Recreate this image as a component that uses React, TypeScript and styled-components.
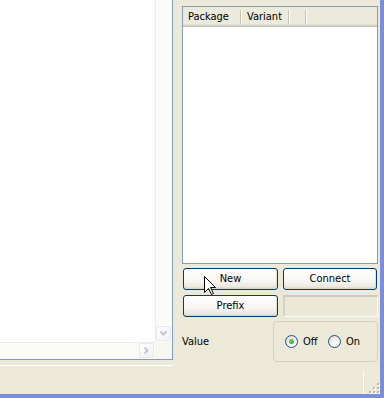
import React from "react";
import styled, { createGlobalStyle } from "styled-components";

const GlobalStyle = createGlobalStyle`
  html, body { margin: 0; padding: 0; background: #ece9d8; }
  body {
    width: 384px; height: 398px; overflow: hidden;
    font-family: "DejaVu Sans Condensed", "Liberation Sans", sans-serif;
    font-size: 11px; color: #000;
  }
  #root { width: 384px; height: 398px; }
`;

const Window = styled.div`
  position: relative;
  width: 384px;
  height: 398px;
  box-sizing: border-box;
  border-right: 4px solid #7b8ddf;
  border-bottom: 4px solid #7b8ddf;
  display: flex;
  flex-direction: column;
  background: #ece9d8;
`;

const Main = styled.div`
  display: flex;
  height: 365px;
  flex: none;
`;

const LeftPanel = styled.div`
  width: 173px;
  height: 360px;
  box-sizing: border-box;
  border-right: 1px solid #7f9db9;
  border-bottom: 1px solid #7f9db9;
  background: #fff;
  display: grid;
  grid-template-columns: 1fr 17px;
  grid-template-rows: 1fr 17px;
`;

const Content = styled.div`
  background: #fff;
`;

const VScroll = styled.div`
  background: #fbfbf8;
  box-shadow: inset 1px 0 0 #ecebe4;
  display: flex;
  flex-direction: column;
  justify-content: flex-end;
`;

const HScroll = styled.div`
  background: #fbfbf8;
  box-shadow: inset 0 1px 0 #ecebe4;
  display: flex;
  justify-content: flex-end;
`;

const Corner = styled.div`
  background: #f7f6f1;
`;

const ScrollButton = styled.div`
  width: 17px;
  height: 17px;
  box-sizing: border-box;
  padding: 1px;
  display: flex;
`;

const ScrollFace = styled.div`
  flex: 1;
  border: 1px solid #e6e9ef;
  border-radius: 2px;
  background: linear-gradient(135deg, #ffffff, #eef0f4);
  display: flex;
  align-items: center;
  justify-content: center;
`;

const RightColumn = styled.div`
  flex: 1;
  display: flex;
  flex-direction: column;
  padding: 6px 2px 0 9px;
`;

const List = styled.div`
  height: 258px;
  box-sizing: border-box;
  border: 1px solid #7f9db9;
  background: #fff;
  display: flex;
  flex-direction: column;
`;

const Header = styled.div`
  height: 20px;
  display: flex;
  background: #ebeadb;
  box-shadow: inset 0 -1px 0 #cbc7b8, inset 0 -2px 0 #d6d2c2, inset 0 -3px 0 #e2e2da;
`;

const HeaderCell = styled.div<{ $w?: number }>`
  ${(p) => (p.$w ? `width: ${p.$w}px; flex: none;` : "flex: 1;")}
  box-sizing: border-box;
  padding: 1px 0 2px 5px;
  display: flex;
  align-items: center;
  white-space: nowrap;
  background-image: ${(p) =>
    p.$w
      ? "linear-gradient(#c7c4b4, #c7c4b4), linear-gradient(#fff, #fff)"
      : "none"};
  background-repeat: no-repeat;
  background-size: 1px 14px, 1px 14px;
  background-position: right 1px top 3px, right 0 top 3px;
`;

const ButtonGrid = styled.div`
  display: grid;
  grid-template-columns: 95px 94px;
  grid-template-rows: 22px 22px;
  column-gap: 5px;
  row-gap: 5px;
  margin: 4px 1px 0;
`;

const Button = styled.div`
  box-sizing: border-box;
  border: 1px solid #003c74;
  border-radius: 3px;
  background: linear-gradient(180deg, #ffffff 0%, #f7f6f2 60%, #ebe8de 88%, #d6d0c5 100%);
  box-shadow: inset -1px 0 0 #e3dfd5;
  display: flex;
  align-items: center;
  justify-content: center;
  padding-bottom: 1px;
`;

const DisabledEdit = styled.div`
  box-sizing: border-box;
  margin-right: -1px;
  border-top: 2px solid #cfcbbb;
  border-left: 2px solid #d8d4c5;
  border-bottom: 1px solid #fdfdfb;
  border-right: 1px solid #fdfdfb;
  background: #ebe8d8;
`;

const ValueRow = styled.div`
  margin-top: 4px;
  display: flex;
  align-items: center;
  justify-content: space-between;
`;

const Label = styled.span`
  padding-left: 0;
`;

const GroupBox = styled.div`
  width: 105px;
  height: 41px;
  box-sizing: border-box;
  border: 1px solid #d5d2c2;
  border-radius: 4px;
  display: grid;
  grid-template-columns: 43px auto;
  align-items: center;
  padding-left: 11px;
`;

const RadioItem = styled.label`
  display: flex;
  align-items: center;
  gap: 5px;
`;

const RadioCircle = styled.span<{ $checked?: boolean }>`
  width: 13px;
  height: 13px;
  box-sizing: border-box;
  border-radius: 50%;
  border: 1px solid #1c5180;
  background: radial-gradient(circle at 70% 75%, #ffffff 0%, #f2f1ec 45%, #d6d4ca 100%);
  display: flex;
  align-items: center;
  justify-content: center;
  &::after {
    content: "";
    display: ${(p) => (p.$checked ? "block" : "none")};
    width: 5px;
    height: 5px;
    border-radius: 50%;
    background: radial-gradient(circle at 40% 40%, #62d862, #21a121);
  }
`;

const StatusBar = styled.div`
  flex: 1;
  display: flex;
`;

const StatusLeft = styled.div`
  width: 173px;
  border-top: 1px solid #fff;
`;

const StatusSpacer = styled.div`
  flex: 1;
`;

const PaneSeparator = styled.div`
  width: 1px;
  margin-top: 6px;
  background: #fff;
`;

const GripPane = styled.div`
  width: 16px;
  display: flex;
`;

const Cursor = styled.svg`
  position: absolute;
  left: 204px;
  top: 276px;
  pointer-events: none;
`;

const Chevron = ({ dir }: { dir: "down" | "right" }) => (
  <svg width="9" height="9" viewBox="0 0 9 9">
    <path
      d={dir === "down" ? "M1.5 2.5 L4.5 5.5 L7.5 2.5" : "M2.5 1.5 L5.5 4.5 L2.5 7.5"}
      fill="none"
      stroke="#c3c7d1"
      strokeWidth="2"
    />
  </svg>
);

const Grip = () => {
  const dots: [number, number][] = [
    [13, 18],
    [9, 22],
    [13, 22],
    [5, 26],
    [9, 26],
    [13, 26],
  ];
  return (
    <svg width="16" height="29" viewBox="0 0 16 29">
      {dots.map(([x, y], i) => (
        <g key={i}>
          <rect x={x + 1} y={y + 1} width="2" height="2" fill="#fff" />
          <rect x={x} y={y} width="2" height="2" fill="#bdb9aa" />
        </g>
      ))}
    </svg>
  );
};

export default function App() {
  return (
    <>
      <GlobalStyle />
      <Window>
        <Main>
          <LeftPanel>
            <Content />
            <VScroll>
              <ScrollButton>
                <ScrollFace>
                  <Chevron dir="down" />
                </ScrollFace>
              </ScrollButton>
            </VScroll>
            <HScroll>
              <ScrollButton>
                <ScrollFace>
                  <Chevron dir="right" />
                </ScrollFace>
              </ScrollButton>
            </HScroll>
            <Corner />
          </LeftPanel>
          <RightColumn>
            <List>
              <Header>
                <HeaderCell $w={59}>Package</HeaderCell>
                <HeaderCell $w={48}>Variant</HeaderCell>
                <HeaderCell $w={17} />
                <HeaderCell />
              </Header>
            </List>
            <ButtonGrid>
              <Button>New</Button>
              <Button>Connect</Button>
              <Button>Prefix</Button>
              <DisabledEdit />
            </ButtonGrid>
            <ValueRow>
              <Label>Value</Label>
              <GroupBox>
                <RadioItem>
                  <RadioCircle $checked />
                  Off
                </RadioItem>
                <RadioItem>
                  <RadioCircle />
                  On
                </RadioItem>
              </GroupBox>
            </ValueRow>
          </RightColumn>
        </Main>
        <StatusBar>
          <StatusLeft />
          <StatusSpacer />
          <PaneSeparator />
          <GripPane>
            <Grip />
          </GripPane>
        </StatusBar>
        <Cursor width="13" height="20" viewBox="0 0 13 20">
          <path
            d="M0.5 0.5 L0.5 16.5 L4.5 12.5 L7.5 18.5 L9.5 17.5 L6.5 11.5 L11.5 11.5 Z"
            fill="#fff"
            stroke="#000"
            strokeWidth="1"
            strokeLinejoin="miter"
          />
        </Cursor>
      </Window>
    </>
  );
}
